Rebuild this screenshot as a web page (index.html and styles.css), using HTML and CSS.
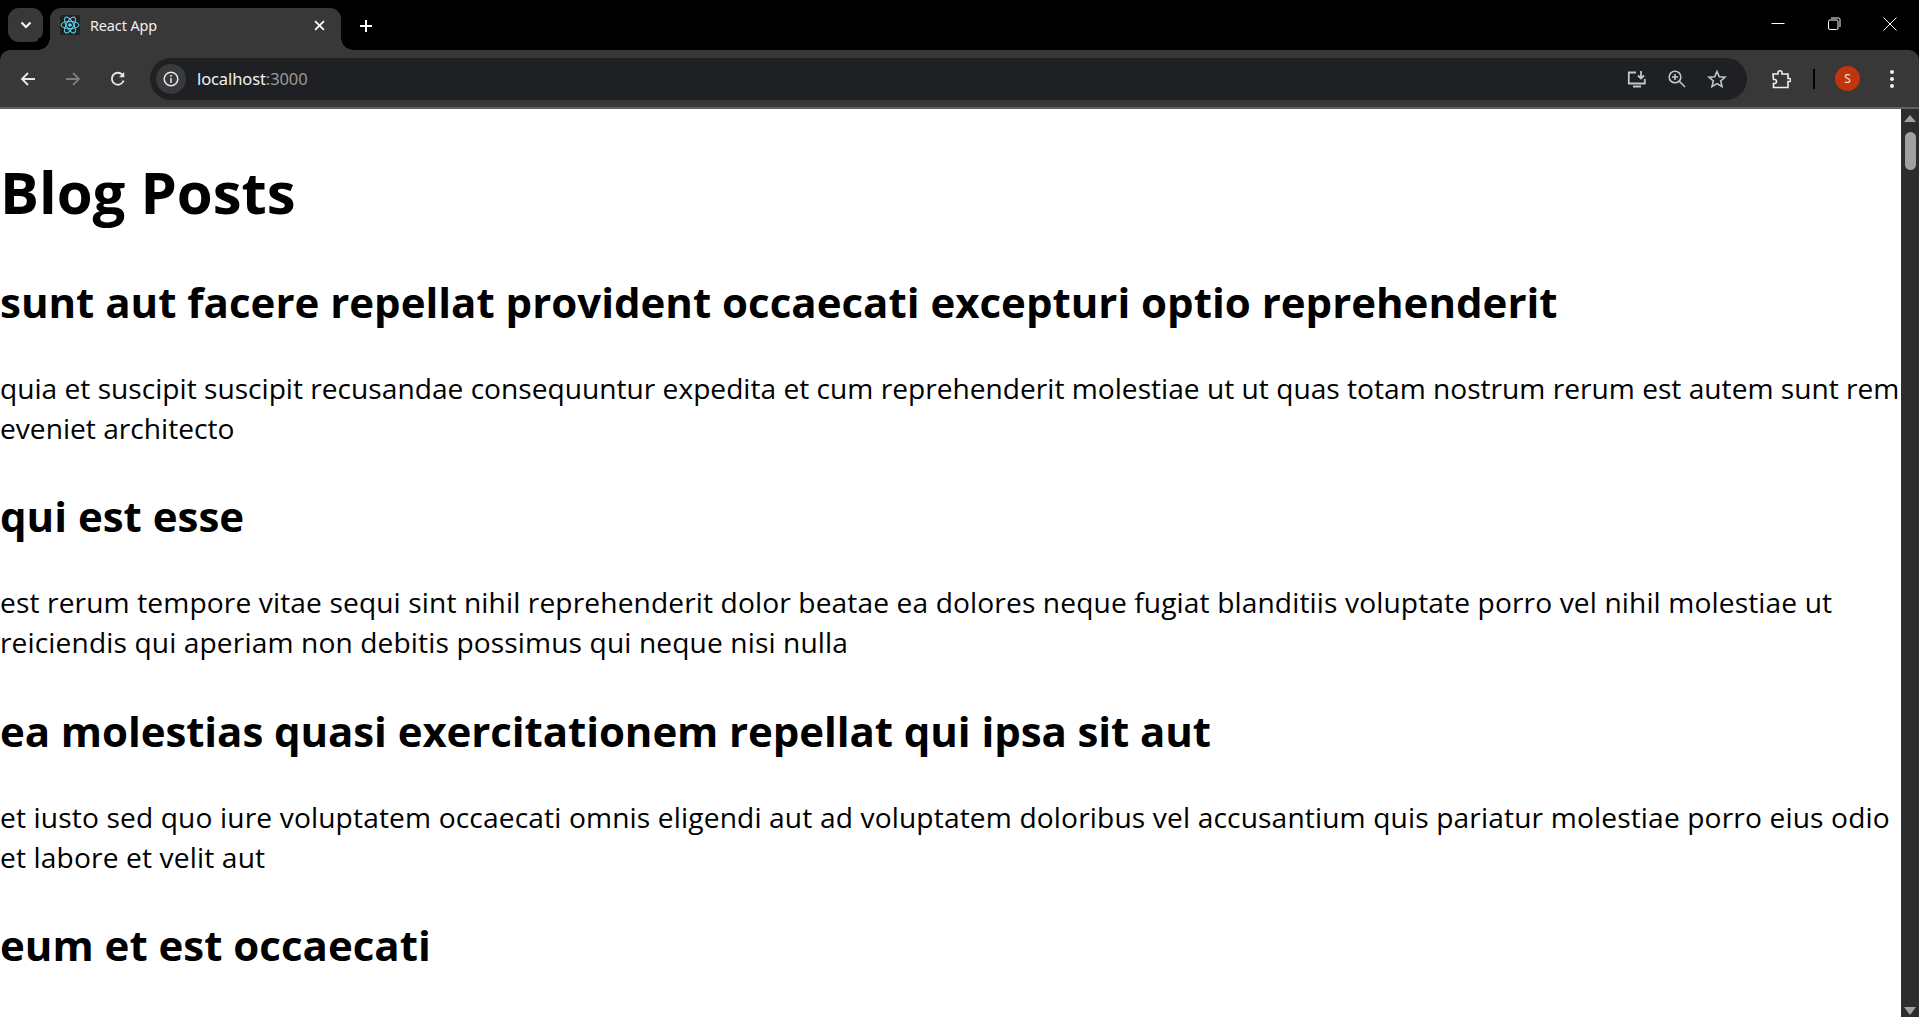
FILE: index.html
```html
<!DOCTYPE html>
<html lang="en">
<head>
<meta charset="utf-8">
<title>React App</title>
<link rel="stylesheet" href="styles.css">
</head>
<body>
<div class="browser">
  <header class="tabstrip">
    <button class="tabsearch" aria-label="Search tabs">
      <svg width="12" height="8" viewBox="0 0 12 8"><path d="M1.5 1.5 6 6l4.500-4.500" fill="none" stroke="#fff" stroke-width="2"/></svg>
    </button>
    <div class="tab">
      <span class="favicon">
        <svg width="20" height="20" viewBox="0 0 20 20" fill="none" stroke="#61dafb" stroke-width="1"><circle cx="10" cy="10" r="1.800" fill="#61dafb" stroke="none"/><ellipse cx="10" cy="10" rx="9" ry="3.600"/><ellipse cx="10" cy="10" rx="9" ry="3.600" transform="rotate(60 10 10)"/><ellipse cx="10" cy="10" rx="9" ry="3.600" transform="rotate(120 10 10)"/></svg>
      </span>
      <span class="tabtitle">React App</span>
      <svg class="tabclose" width="11" height="11" viewBox="0 0 10 10"><path d="M1 1l8 8M9 1l-8 8" stroke="#fff" stroke-width="1.600"/></svg>
    </div>
    <svg class="newtab" width="14" height="14" viewBox="0 0 14 14"><path d="M7 1v12M1 7h12" stroke="#fff" stroke-width="2"/></svg>
    <div class="wincontrols">
      <svg width="14" height="14" viewBox="0 0 14 14"><path d="M0.500 6.500h13" stroke="#fff" stroke-width="1"/></svg>
      <svg width="14" height="14" viewBox="0 0 14 14" fill="none" stroke="#fff" stroke-width="1"><rect x="1.500" y="3" width="9.500" height="9.500" rx="1.500"/><path d="M4 1h7.500a1.500 1.500 0 0 1 1.500 1.500V10"/></svg>
      <svg width="14" height="14" viewBox="0 0 14 14"><path d="M.5.500l13 13M13.500.500l-13 13" stroke="#fff" stroke-width="1"/></svg>
    </div>
  </header>
  <nav class="toolbar">
    <div class="navbuttons">
      <svg width="16" height="16" viewBox="0 0 16 16" fill="none" stroke="#e8e8e8" stroke-width="1.800"><path d="M15 8H2M8 2 2 8l6 6"/></svg>
      <svg width="16" height="16" viewBox="0 0 16 16" fill="none" stroke="#7e7e7e" stroke-width="1.800"><path d="M1 8h13M8 2l6 6-6 6"/></svg>
      <svg width="16" height="16" viewBox="0 0 16 16" fill="none" stroke="#e8e8e8" stroke-width="1.800"><path d="M13.600 9.500A6 6 0 1 1 12.300 3.700L14 5.500"/><path d="M14.200 1v5.200H9" stroke="none" fill="#e8e8e8"/></svg>
    </div>
    <div class="omnibox">
      <span class="infochip">
        <svg width="16" height="16" viewBox="0 0 16 16" fill="none" stroke="#e8e8e8" stroke-width="1.500"><circle cx="8" cy="8" r="6.800"/><path d="M8 7v5M8 4v1.800"/></svg>
      </span>
      <span class="url">localhost<span class="port">:3000</span></span>
      <div class="omniicons">
        <svg width="20" height="20" viewBox="0 0 20 20" fill="none" stroke="#c4c7c5" stroke-width="1.800"><path d="M9 3.500H1.800v11h16V10"/><path d="M6 17.500h8" stroke-width="2"/><path d="M14 2v7M11 6.500 14 9.500l3-3"/></svg>
        <svg width="20" height="20" viewBox="0 0 20 20" fill="none" stroke="#c4c7c5" stroke-width="1.600"><circle cx="8" cy="8" r="5.800"/><path d="M12.300 12.300 18 18M5 8h6M8 5v6"/></svg>
        <svg width="20" height="20" viewBox="0 0 20 20" fill="none" stroke="#c4c7c5" stroke-width="1.600"><path d="M10 2.500l2.300 5.200 5.700.500-4.300 3.800 1.300 5.600-5-3-5 3 1.300-5.600L2 8.200l5.700-.500z"/></svg>
      </div>
    </div>
    <div class="toolicons">
      <svg width="20" height="20" viewBox="0 0 20 20" fill="none" stroke="#f0f0f0" stroke-width="1.600"><path d="M2 5h5V3.800a2 2 0 0 1 4 0V5h6v4.500h1.300a1.500 1.500 0 0 1 0 3H17v6H2.500v-4h1a2 2 0 0 0 0-4h-1z"/></svg>
      <span class="divider"></span>
      <span class="avatar">S</span>
      <svg width="4" height="18" viewBox="0 0 4 18" fill="#f0f0f0"><circle cx="2" cy="2" r="2"/><circle cx="2" cy="9" r="2"/><circle cx="2" cy="16" r="2"/></svg>
    </div>
  </nav>
  <div class="viewport">
    <main class="page">
      <h1>Blog Posts</h1>
      <article>
        <h2>sunt aut facere repellat provident occaecati excepturi optio reprehenderit</h2>
        <p>quia et suscipit suscipit recusandae consequuntur expedita et cum reprehenderit molestiae ut ut quas totam nostrum rerum est autem sunt rem eveniet architecto</p>
      </article>
      <article class="post-second">
        <h2>qui est esse</h2>
        <p>est rerum tempore vitae sequi sint nihil reprehenderit dolor beatae ea dolores neque fugiat blanditiis voluptate porro vel nihil molestiae ut reiciendis qui aperiam non debitis possimus qui neque nisi nulla</p>
      </article>
      <article class="post-third">
        <h2>ea molestias quasi exercitationem repellat qui ipsa sit aut</h2>
        <p>et iusto sed quo iure voluptatem occaecati omnis eligendi aut ad voluptatem doloribus vel accusantium quis pariatur molestiae porro eius odio et labore et velit aut</p>
      </article>
      <article>
        <h2>eum et est occaecati</h2>
      </article>
    </main>
    <aside class="scrollbar">
      <span class="arrow-up"></span>
      <span class="thumb"></span>
      <span class="track"></span>
      <span class="arrow-down"></span>
    </aside>
  </div>
</div>
</body>
</html>
```
FILE: styles.css
```css
* { box-sizing: border-box; }
html, body { margin: 0; height: 100%; overflow: hidden; }
body { background: #000; font-family: "Open Sans", "Noto Sans", "Liberation Sans", sans-serif; }
.browser { display: flex; flex-direction: column; height: 100vh; }

.tabstrip { display: flex; align-items: flex-start; height: 50px; flex: none; padding: 8px 0 0 8px; background: #000; position: relative; }
.tabsearch { width: 35px; height: 34px; border: 0; padding: 0; border-radius: 11px; background: #383838; display: flex; align-items: center; justify-content: center; }
.tab { width: 291px; height: 42px; margin-left: 7px; background: #383838; border-radius: 11px 11px 0 0; display: flex; align-items: flex-start; padding: 7px 16px 0 10px; position: relative; color: #f0f0f0; }
.tab::before, .tab::after { content: ""; position: absolute; bottom: 0; width: 12px; height: 12px; }
.tab::before { left: -12px; background: radial-gradient(circle at 0 0, #000 11.5px, #383838 12px); }
.tab::after { right: -12px; background: radial-gradient(circle at 100% 0, #000 11.500px, #383838 12px); }
.favicon { width: 20px; height: 20px; background: #222; border-radius: 2px; flex: none; display: block; }
.favicon svg { display: block; }
.tabtitle { margin-left: 10px; font-family: "Noto Sans", sans-serif; font-size: 14.4px; line-height: 22px; flex: 1; letter-spacing: -.1px; }
.tabclose { margin-top: 5px; }
.newtab { margin: 11px 0 0 18px; }
.wincontrols { margin-left: auto; display: flex; gap: 42px; padding: 9px 22px 0 0; }

.toolbar { height: 59px; flex: none; display: flex; align-items: center; background: #383838; border-bottom: 2px solid #606060; border-radius: 10px 10px 0 0; padding: 0 19px 0 0; }
.navbuttons { display: flex; gap: 29px; width: 150px; padding-left: 20px; flex: none; }
.omnibox { flex: none; width: 1597px; height: 42px; border-radius: 21px; background: #1f2023; display: flex; align-items: center; padding: 0 20px 0 6px; }
.infochip { width: 30px; height: 30px; border-radius: 50%; background: #383a3c; display: flex; align-items: center; justify-content: center; flex: none; }
.url { margin-left: 11px; font-family: "Noto Sans", sans-serif; font-size: 16.5px; color: #f2f2f2; letter-spacing: -.1px; }
.port { color: #9a9a9a; }
.omniicons { margin-left: auto; display: flex; gap: 20px; }
.toolicons { display: flex; align-items: center; margin-left: 24px; flex: 1; }
.divider { width: 2px; height: 20px; background: #000; margin-left: 22px; }
.avatar { width: 25px; height: 25px; border-radius: 50%; background: #c0360c; color: #f4e5df; font-family: "Noto Sans", sans-serif; font-size: 12px; display: flex; align-items: center; justify-content: center; margin-left: 20px; }
.toolicons > svg:last-child { margin-left: 30px; }

.viewport { flex: 1; min-height: 0; display: flex; background: #fff; }
.page { flex: 1; min-width: 0; overflow: hidden; color: #000; padding-top: 2.5px; }
h1 { margin: 40px 0; font-size: 58px; line-height: 80px; font-weight: 700; }
h2 { margin: 38.6px 0 36px; font-size: 42px; line-height: 60px; font-weight: 700; }
p { margin: 0; font-size: 28.15px; line-height: 40px; }
.post-second p { letter-spacing: .12px; }
.post-third h2 { letter-spacing: -.08px; }
.post-third p { letter-spacing: .14px; }

.scrollbar { width: 18px; flex: none; background: #2c2c2c; display: flex; flex-direction: column; align-items: center; }
.arrow-up { margin-top: 6px; width: 0; height: 0; border-left: 6px solid transparent; border-right: 6px solid transparent; border-bottom: 7px solid #a0a0a0; }
.thumb { margin-top: 10px; width: 11px; height: 38px; border-radius: 6px; background: #a0a0a0; }
.track { flex: 1; }
.arrow-down { margin-bottom: 2px; width: 0; height: 0; border-left: 6px solid transparent; border-right: 6px solid transparent; border-top: 8px solid #a0a0a0; }
```
